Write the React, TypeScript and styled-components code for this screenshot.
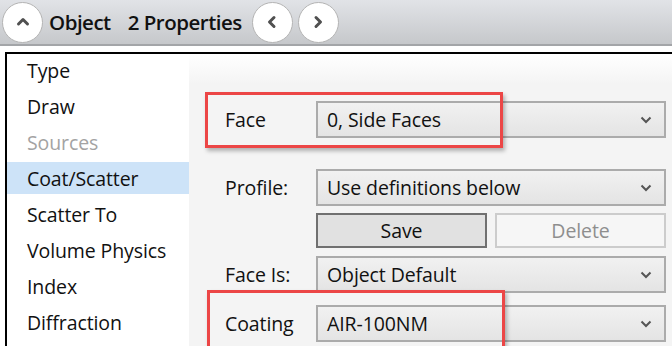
import * as React from 'react'
import styled, { createGlobalStyle } from 'styled-components'

const GlobalStyle = createGlobalStyle`
  html, body {
    margin: 0;
    padding: 0;
    background: #ffffff;
  }
  body {
    width: 672px;
    height: 346px;
    overflow: hidden;
    font-family: "Open Sans", "Noto Sans", sans-serif;
    color: #111111;
  }
`

const Page = styled.div`
  display: flex;
  flex-direction: column;
  width: 672px;
  height: 346px;
  overflow: hidden;
`

const TopBar = styled.div`
  display: flex;
  align-items: center;
  height: 44px;
  padding-left: 2px;
  background: linear-gradient(#e1e3e7, #c6c8cb);
  border-bottom: 2px solid #a3a5a8;
`

const RoundButton = styled.button`
  display: flex;
  align-items: center;
  justify-content: center;
  width: 41px;
  height: 41px;
  padding: 0;
  border-radius: 50%;
  border: 1px solid #b4b4b4;
  background: #ffffff;
  margin-right: ${(props: { gap?: number }) => props.gap || 0}px;
`

const Title = styled.div`
  display: flex;
  gap: 17px;
  font-size: 20.5px;
  font-weight: 600;
  color: #111111;
  margin: 0 10px 0 6px;
  letter-spacing: -0.5px;
`

const Body = styled.div`
  flex: 1;
  display: flex;
  margin: 6px 0 0 5px;
  border-top: 2px solid #000000;
  border-left: 2px solid #000000;
`

const SideList = styled.div`
  width: 182px;
  background: #ffffff;
  display: flex;
  flex-direction: column;
`

interface SideItemProps {
  active?: boolean,
  disabled?: boolean,
}

const SideItem = styled.div<SideItemProps>`
  height: 32px;
  margin-bottom: 4px;
  padding-left: 20px;
  display: flex;
  align-items: center;
  font-size: 19.5px;
  letter-spacing: -0.1px;
  color: ${(props) => props.disabled ? '#a3a3a3' : '#111111'};
  background: ${(props) => props.active ? '#cde3f8' : 'transparent'};
`

const Content = styled.div`
  flex: 1;
  padding: 47px 6px 0 36px;
  background: linear-gradient(#ffffff 0px, #f4f4f4 30px, #f4f4f4 100%);
  display: flex;
  flex-direction: column;
`

const Row = styled.div`
  position: relative;
  display: flex;
  align-items: center;
  margin-bottom: ${(props: { after?: number }) => props.after || 0}px;
`

const Label = styled.div`
  width: 91px;
  font-size: 19.5px;
  letter-spacing: -0.1px;
  color: #111111;
`

const Select = styled.div`
  flex: 1;
  height: 33px;
  display: flex;
  align-items: center;
  justify-content: space-between;
  padding: 0 12px 0 9px;
  border: 2px solid #ababab;
  background: linear-gradient(#f1f1f1, #e4e4e4);
  font-size: 19.5px;
  letter-spacing: -0.1px;
  color: #111111;
`

const ButtonPair = styled.div`
  flex: 1;
  display: flex;
  gap: 8px;
`

const PushButton = styled.div`
  flex: 1;
  height: 31px;
  display: flex;
  align-items: center;
  justify-content: center;
  font-size: 19.5px;
  letter-spacing: -0.1px;
  border: 2px solid ${(props: { disabled?: boolean }) => props.disabled ? '#cccccc' : '#707070'};
  background: ${(props: { disabled?: boolean }) => props.disabled ? '#f6f6f6' : '#e1e1e1'};
  color: ${(props: { disabled?: boolean }) => props.disabled ? '#8e8e8e' : '#111111'};
`

interface CalloutProps {
  left: number,
  top: number,
  height: number,
}

// red annotation frame drawn over a form row
const Callout = styled.div<CalloutProps>`
  position: absolute;
  left: ${(props) => props.left}px;
  top: ${(props) => props.top}px;
  width: 298px;
  height: ${(props) => props.height}px;
  box-sizing: border-box;
  border: 3px solid #ec4646;
  box-shadow: 2px 3px 4px rgba(0, 0, 0, 0.28);
  pointer-events: none;
`

const Chevron = ({ dir }: { dir: 'up' | 'left' | 'right' }) => {
  const paths = {
    up: 'M3.5 10 L8 5.5 L12.5 10',
    left: 'M10 3.5 L5.5 8 L10 12.5',
    right: 'M6 3.5 L10.5 8 L6 12.5',
  }
  return (
    <svg width="16" height="16" viewBox="0 0 16 16">
      <path d={paths[dir]} fill="none" stroke="#505050" strokeWidth="3" strokeLinecap="round" strokeLinejoin="round" />
    </svg>
  )
}

const SmallChevron = () => (
  <svg width="12" height="8" viewBox="0 0 12 8">
    <path d="M1.5 1.5 L6 6 L10.5 1.5" fill="none" stroke="#555555" strokeWidth="2" />
  </svg>
)

const sideItems = [
  { name: 'Type' },
  { name: 'Draw' },
  { name: 'Sources', disabled: true },
  { name: 'Coat/Scatter', active: true },
  { name: 'Scatter To' },
  { name: 'Volume Physics' },
  { name: 'Index' },
  { name: 'Diffraction' },
]

const App = () => (
  <Page>
    <GlobalStyle />
    <TopBar>
      <RoundButton><Chevron dir="up" /></RoundButton>
      <Title>
        <span>Object</span>
        <span>2 Properties</span>
      </Title>
      <RoundButton gap={5}><Chevron dir="left" /></RoundButton>
      <RoundButton><Chevron dir="right" /></RoundButton>
    </TopBar>
    <Body>
      <SideList>
        {sideItems.map((item) => (
          <SideItem key={item.name} active={item.active} disabled={item.disabled}>{item.name}</SideItem>
        ))}
      </SideList>
      <Content>
        <Row after={31}>
          <Callout left={-20} top={-9} height={56} />
          <Label>Face</Label>
          <Select>0, Side Faces<SmallChevron /></Select>
        </Row>
        <Row after={7}>
          <Label>Profile:</Label>
          <Select>Use definitions below<SmallChevron /></Select>
        </Row>
        <Row after={8}>
          <Label />
          <ButtonPair>
            <PushButton>Save</PushButton>
            <PushButton disabled>Delete</PushButton>
          </ButtonPair>
        </Row>
        <Row after={12}>
          <Label>Face Is:</Label>
          <Select>Object Default<SmallChevron /></Select>
        </Row>
        <Row>
          <Callout left={-18} top={-15} height={62} />
          <Label>Coating</Label>
          <Select>AIR-100NM<SmallChevron /></Select>
        </Row>
      </Content>
    </Body>
  </Page>
)

export default App
